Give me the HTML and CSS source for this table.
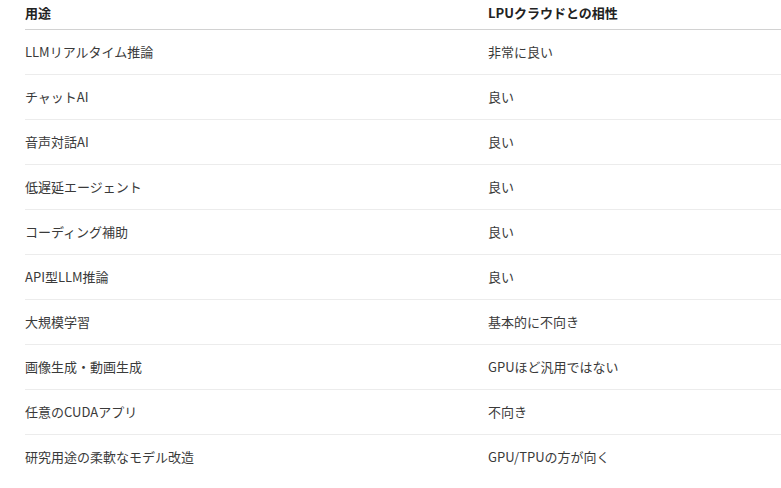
FILE: index.html
```html
<!DOCTYPE html>
<html lang="ja">
<head>
<meta charset="utf-8">
<link rel="stylesheet" href="styles.css">
</head>
<body>
<table class="tbl">
  <thead>
    <tr><th class="c1">用途</th><th>LPUクラウドとの相性</th></tr>
  </thead>
  <tbody>
    <tr><td class="c1">LLMリアルタイム推論</td><td>非常に良い</td></tr>
    <tr><td class="c1">チャットAI</td><td>良い</td></tr>
    <tr><td class="c1">音声対話AI</td><td>良い</td></tr>
    <tr><td class="c1">低遅延エージェント</td><td>良い</td></tr>
    <tr><td class="c1">コーディング補助</td><td>良い</td></tr>
    <tr><td class="c1">API型LLM推論</td><td>良い</td></tr>
    <tr><td class="c1">大規模学習</td><td>基本的に不向き</td></tr>
    <tr><td class="c1">画像生成・動画生成</td><td>GPUほど汎用ではない</td></tr>
    <tr><td class="c1">任意のCUDAアプリ</td><td>不向き</td></tr>
    <tr class="last"><td class="c1">研究用途の柔軟なモデル改造</td><td>GPU/TPUの方が向く</td></tr>
  </tbody>
</table>
</body>
</html>
```
FILE: styles.css
```css
html, body {
  margin: 0;
  padding: 0;
  background: #ffffff;
}
body {
  font-family: "Noto Sans CJK JP", "Noto Sans", "Liberation Sans", sans-serif;
  font-size: 13px;
  color: #3a3a3a;
}
.tbl {
  margin-left: 25px;
  width: 756px;
  border-collapse: collapse;
  table-layout: fixed;
}
.tbl th, .tbl td {
  text-align: left;
  padding: 0;
  line-height: 18px;
  vertical-align: top;
  box-sizing: border-box;
}
.tbl .c1 {
  width: 463px;
}
.tbl th {
  font-weight: 600;
  color: #222222;
  height: 29px;
  padding-top: 4px;
  padding-bottom: 7px;
  border-bottom: 1px solid #d2d2d2;
}
.tbl td {
  height: 44px;
  padding-top: 13px;
  padding-bottom: 13px;
  border-bottom: 1px solid #ececec;
}
.tbl tr.last td {
  border-bottom: none;
}
```
